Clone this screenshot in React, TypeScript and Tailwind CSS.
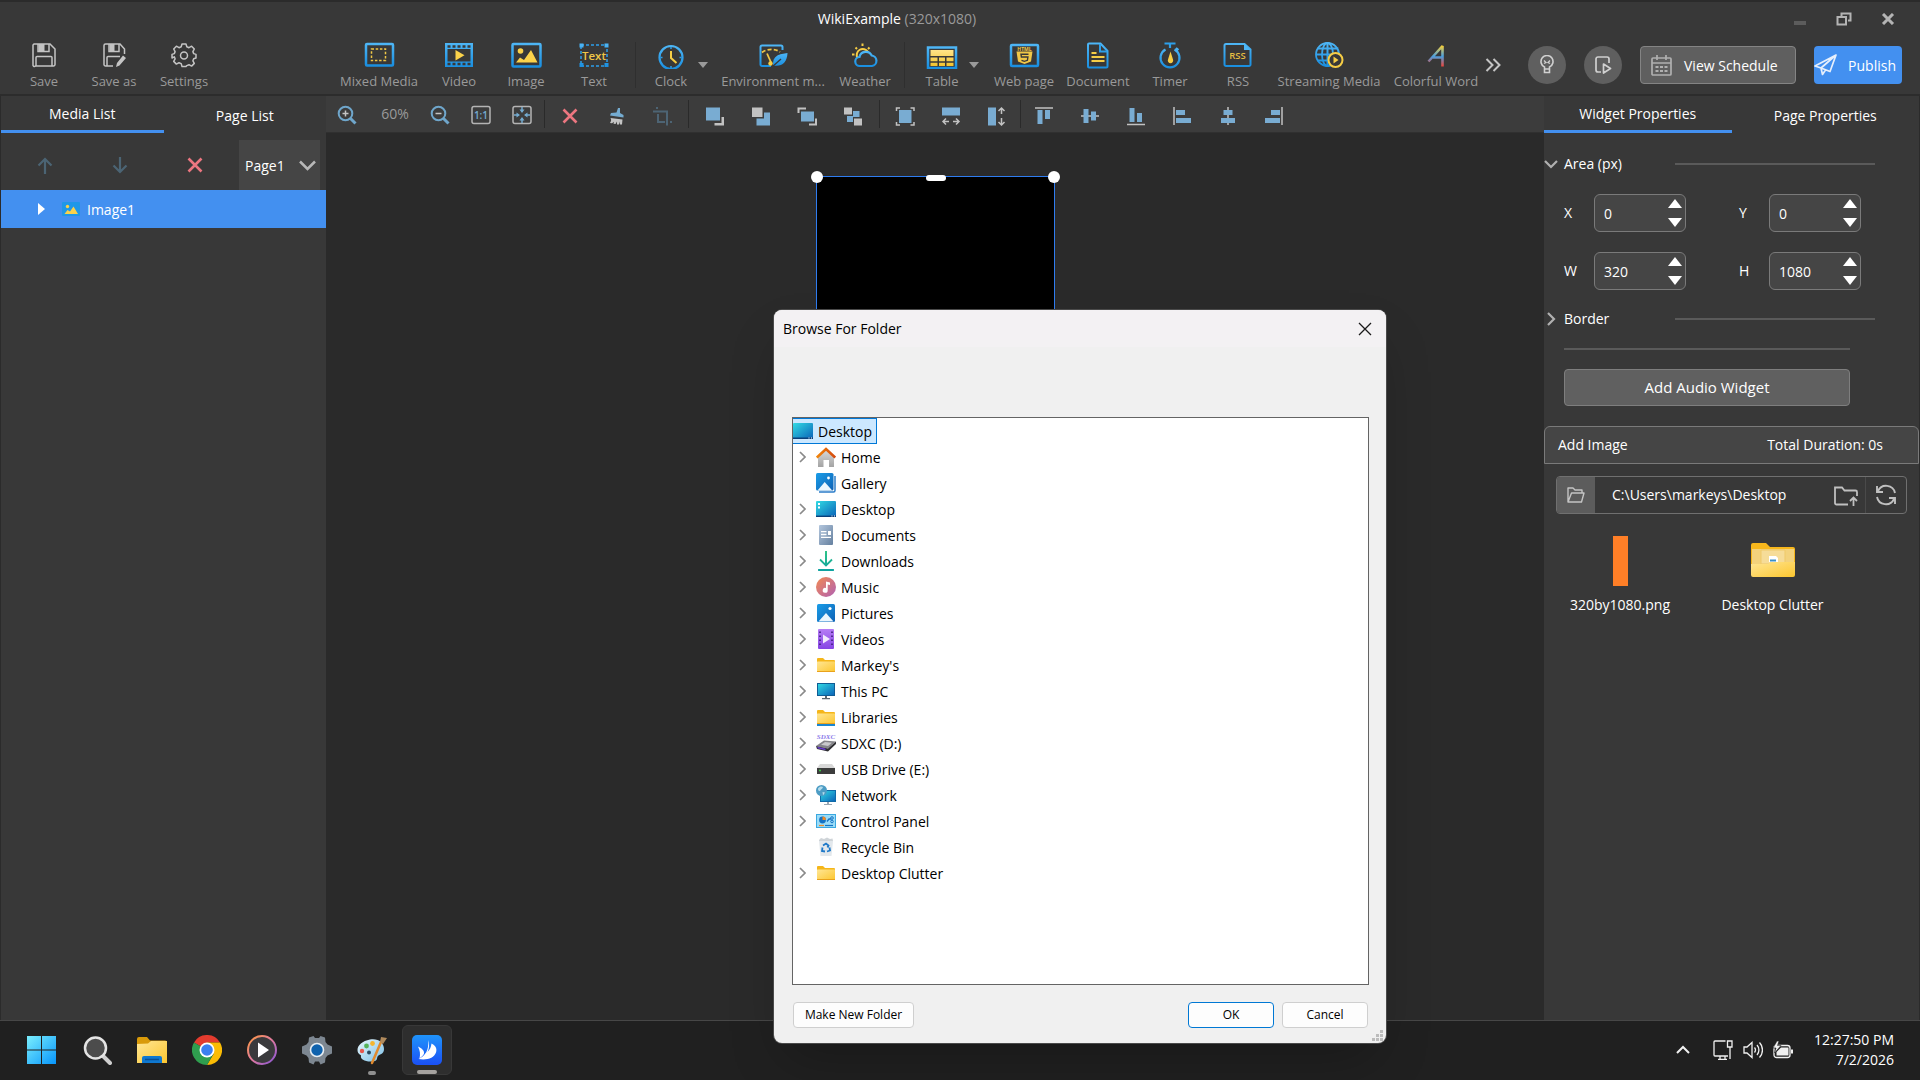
import React from 'react';

type Icon = React.FC;

/* ---------- shared gradients ---------- */

const Gradients: React.FC = () => (
  <svg className="absolute h-0 w-0" aria-hidden="true">
    <defs>
      <linearGradient id="gBlue" x1="0" y1="0" x2="0" y2="1">
        <stop offset="0" stopColor="#4db5f5" />
        <stop offset="1" stopColor="#1a8fe0" />
      </linearGradient>
      <linearGradient id="gYellow" x1="0" y1="0" x2="0" y2="1">
        <stop offset="0" stopColor="#ffe48a" />
        <stop offset="1" stopColor="#f2c32e" />
      </linearGradient>
      <linearGradient id="gScreen" x1="0" y1="0" x2="1" y2="1">
        <stop offset="0" stopColor="#32dbe4" />
        <stop offset="1" stopColor="#0a62b8" />
      </linearGradient>
      <linearGradient id="gPhoto" x1="0" y1="0" x2="1" y2="1">
        <stop offset="0" stopColor="#1a9de8" />
        <stop offset="1" stopColor="#0f62b5" />
      </linearGradient>
      <linearGradient id="gFolder" x1="0" y1="0" x2="1" y2="1">
        <stop offset="0" stopColor="#ffe694" />
        <stop offset="1" stopColor="#fcc62f" />
      </linearGradient>
      <linearGradient id="gDoc" x1="0" y1="0" x2="1" y2="1">
        <stop offset="0" stopColor="#b3c6dd" />
        <stop offset="1" stopColor="#65809f" />
      </linearGradient>
      <linearGradient id="gMusic" x1="0" y1="0" x2="1" y2="1">
        <stop offset="0" stopColor="#f38a52" />
        <stop offset="1" stopColor="#b061b4" />
      </linearGradient>
      <linearGradient id="gVideo" x1="0" y1="0" x2="0" y2="1">
        <stop offset="0" stopColor="#b67df5" />
        <stop offset="1" stopColor="#8544e4" />
      </linearGradient>
      <linearGradient id="gGreen" x1="0" y1="0" x2="0" y2="1">
        <stop offset="0" stopColor="#2fc487" />
        <stop offset="1" stopColor="#0fa3a0" />
      </linearGradient>
      <linearGradient id="gHouse" x1="0" y1="0" x2="0" y2="1">
        <stop offset="0" stopColor="#dcdcdc" />
        <stop offset="1" stopColor="#a3a3a3" />
      </linearGradient>
      <linearGradient id="gRoof" x1="0" y1="0" x2="1" y2="0">
        <stop offset="0" stopColor="#f2860a" />
        <stop offset="1" stopColor="#d44a10" />
      </linearGradient>
      <linearGradient id="gWord" x1="0" y1="0" x2="0" y2="1">
        <stop offset="0" stopColor="#f6cf3a" />
        <stop offset="0.5" stopColor="#4aa0e0" />
        <stop offset="1" stopColor="#f0453a" />
      </linearGradient>
      <linearGradient id="gWin" x1="0" y1="0" x2="1" y2="1">
        <stop offset="0" stopColor="#7beffd" />
        <stop offset="1" stopColor="#0795fb" />
      </linearGradient>
      <linearGradient id="gRing" x1="0" y1="0" x2="1" y2="1">
        <stop offset="0" stopColor="#ff9a3d" />
        <stop offset="0.5" stopColor="#e07aa0" />
        <stop offset="1" stopColor="#8353d8" />
      </linearGradient>
      <linearGradient id="gBird" x1="0" y1="0" x2="0" y2="1">
        <stop offset="0" stopColor="#1f94fb" />
        <stop offset="1" stopColor="#1b50f5" />
      </linearGradient>
      <linearGradient id="gPalette" x1="0" y1="0" x2="1" y2="1">
        <stop offset="0" stopColor="#e9f7fd" />
        <stop offset="1" stopColor="#7cc0e6" />
      </linearGradient>
    </defs>
  </svg>
);

/* ---------- main toolbar icons, 32x28 ---------- */

const Tool: React.FC<{ children: React.ReactNode }> = ({ children }) => (
  <svg width="32" height="28" viewBox="0 0 32 28" fill="none" aria-hidden="true">
    {children}
  </svg>
);

const SaveIcon: Icon = () => (
  <Tool>
    <g stroke="#c4c4c4" strokeWidth="1.5">
      <path d="M6 3h16l5 5v15.500a1.500 1.500 0 0 1-1.500 1.500h-18A1.500 1.500 0 0 1 5 23.500V4z" />
      <path d="M8 25v-8.500a1 1 0 0 1 1-1h14a1 1 0 0 1 1 1V25" />
      <path d="M10 3v7.500h11V3" />
    </g>
    <path d="M10.500 3h6v7h-6z" fill="#c4c4c4" />
  </Tool>
);

const SaveAsIcon: Icon = () => (
  <Tool>
    <g stroke="#c4c4c4" strokeWidth="1.500">
      <path d="M15 25H7.500A1.500 1.500 0 0 1 6 23.500V4.500A1.500 1.500 0 0 1 7.500 3H22l4.500 5v5" />
      <path d="M9 25v-8.500a1 1 0 0 1 1-1h12" />
      <path d="M11 3v7.500h10V3" />
    </g>
    <path d="M11.500 3h5v7h-5zM25 14.500l3 2.500-6.500 7.500-3.500 1.500 1-4z" fill="#c4c4c4" />
  </Tool>
);

const GearIcon: Icon = () => (
  <Tool>
    <g stroke="#c4c4c4" strokeWidth="1.500" strokeLinejoin="round">
      <path d="M14 3h4l.8 2.800 2.200.9 2.600-1.500 2.700 2.800-1.400 2.600.8 2 2.300.8v3.600l-2.300.8-.8 2 1.400 2.600-2.700 2.700-2.600-1.400-2.200.9L18 25.500h-4l-.8-2.900-2.200-.9-2.600 1.400-2.700-2.700 1.400-2.600-.8-2L4 17v-3.600l2.300-.8.8-2L5.700 8l2.700-2.800L11 6.700l2.200-.9z" />
      <circle cx="16" cy="14.500" r="3.500" />
    </g>
  </Tool>
);

const MixedMediaIcon: Icon = () => (
  <Tool>
    <rect x="3" y="3" width="27" height="21.500" rx="1" stroke="url(#gBlue)" strokeWidth="2.500" />
    <rect x="8.500" y="8" width="14" height="11.500" stroke="#f0c747" strokeWidth="1.500" strokeDasharray="2.500 1.700" />
  </Tool>
);

const VideoIcon: Icon = () => (
  <Tool>
    <path d="M2 2h28v24H2z" fill="url(#gBlue)" />
    <path d="M4.500 8h23v12.500h-23z" fill="#383838" />
    <path d="M4.500 5.500h23M4.500 23h23" stroke="#383838" strokeWidth="2.500" strokeDasharray="3 2" />
    <path d="M12.500 9l9 5.200-9 5.200z" fill="#fbd24a" />
  </Tool>
);

const ImageIcon: Icon = () => (
  <Tool>
    <rect x="2.500" y="3" width="28" height="22.500" rx="1" stroke="url(#gBlue)" strokeWidth="2.500" />
    <circle cx="10.500" cy="10" r="2.800" fill="#fbd24a" />
    <path d="M6 21.500l4-5 4 2.500 7-10 6.500 12.500z" fill="#fbd24a" />
  </Tool>
);

const TextIcon: Icon = () => (
  <Tool>
    <rect x="3" y="4" width="26" height="21" stroke="#2d9fea" strokeWidth="1.500" strokeDasharray="3 2" />
    <path d="M1.500 2.500h4v4h-4zM26.500 2.500h4v4h-4zM1.500 22h4v4h-4zM26.500 22h4v4h-4z" fill="url(#gBlue)" />
    <text x="16" y="18.500" textAnchor="middle" fontSize="11.500" fontFamily="Open Sans, sans-serif" fontWeight="600" fill="#f0c747">
      Text
    </text>
  </Tool>
);

const ClockIcon: Icon = () => (
  <Tool>
    <circle cx="16" cy="16.500" r="11.500" stroke="url(#gBlue)" strokeWidth="2.200" />
    <path d="M16 10v7l5.500 5" stroke="#f6cd45" strokeWidth="2" />
    <path d="M16 6v2M16 25v2M5.500 16.500h2M24.500 16.500h2" stroke="#2d9fea" strokeWidth="1.500" />
  </Tool>
);

const EnvironmentIcon: Icon = () => (
  <Tool>
    <path d="M25.500 9V6a1.500 1.500 0 0 0-1.500-1.500H5A1.500 1.500 0 0 0 3.500 6v17.500A1.500 1.500 0 0 0 5 25h9" stroke="url(#gBlue)" strokeWidth="2" />
    <path d="M5 11.500c4-3.500 13-4.500 18-.5" stroke="#f0c747" strokeWidth="1.800" strokeDasharray="4 2.200" />
    <path d="M10 12.500l4.500 10" stroke="#f0c747" strokeWidth="1.800" />
    <circle cx="13.500" cy="22.500" r="2.200" fill="#f6cd45" />
    <path d="M30.500 12c-8 1-15 2-14.500 12.500 9 1.500 14-3 14.500-12.500z" fill="url(#gBlue)" />
    <path d="M15 26l9-8" stroke="#383838" strokeWidth="1.300" />
  </Tool>
);

const WeatherIcon: Icon = () => (
  <Tool>
    <path d="M8.500 17a6 6 0 1 1 10.500-6" stroke="#f6cd45" strokeWidth="2" />
    <path d="M13.500 2.500v2.500M6.500 6.500l1.500 1.500M20.500 6.500l-1.500 1.500M3 13.500h2.500" stroke="#f6cd45" strokeWidth="2" />
    <path d="M11 25a4.500 4.500 0 0 1-.5-9 6.500 6.500 0 0 1 12.200-1.500A5.300 5.300 0 0 1 23 25z" stroke="url(#gBlue)" strokeWidth="2.200" fill="#383838" />
  </Tool>
);

const TableIcon: Icon = () => (
  <Tool>
    <rect x="2" y="6.500" width="28" height="20.500" stroke="url(#gBlue)" strokeWidth="2.500" />
    <path d="M4.500 9h23v6h-23zM4.500 16.500h7v3.800h-7zM13 16.500h6v3.800h-6zM20.500 16.500h7v3.800h-7zM4.500 21.800h7V25h-7zM13 21.800h6V25h-6zM20.500 21.800h7V25h-7z" fill="url(#gYellow)" />
  </Tool>
);

const WebPageIcon: Icon = () => (
  <Tool>
    <rect x="3" y="4" width="27" height="21" rx="1" stroke="url(#gBlue)" strokeWidth="2.500" />
    <text x="16.500" y="9.500" textAnchor="middle" fontSize="5" fontFamily="Open Sans, sans-serif" fontWeight="700" fill="#f0c747">
      HTML
    </text>
    <path d="M8.500 10.500h16l-1.500 10-6.500 2.500-6.500-2.500z" fill="#f0c747" />
    <path d="M20.500 13.200h-7.500l.4 2.800h6.500l-.5 3.300-3 1-2.900-1" stroke="#383838" strokeWidth="1.400" />
  </Tool>
);

const DocumentIcon: Icon = () => (
  <Tool>
    <path d="M7 2.500h11.500l7 7.500v15.500a1 1 0 0 1-1 1H7a1 1 0 0 1-1-1v-22a1 1 0 0 1 1-1z" stroke="url(#gBlue)" strokeWidth="2" />
    <path d="M18 3v7.500h7" stroke="#2d9fea" strokeWidth="2" />
    <path d="M9.500 12h5M9.500 16h13M9.500 20h13" stroke="#f6cd45" strokeWidth="1.800" />
  </Tool>
);

const TimerIcon: Icon = () => (
  <Tool>
    <path d="M10.500 2.500h11M16 3v4" stroke="#2d9fea" strokeWidth="2.200" />
    <path d="M11.500 8.500a9.500 9.500 0 1 0 9 0M22 7l2.500 2" stroke="url(#gBlue)" strokeWidth="2.200" />
    <path d="M16.500 10.500l2.500 8a2.700 2.700 0 1 1-5 0z" fill="#f6cd45" />
  </Tool>
);

const RssIcon: Icon = () => (
  <Tool>
    <path d="M4 3h18.500l6 5.500v15a1.500 1.500 0 0 1-1.500 1.500H4a1.500 1.500 0 0 1-1.500-1.500v-19A1.500 1.500 0 0 1 4 3z" stroke="url(#gBlue)" strokeWidth="2" />
    <path d="M22 2.500V9h6.500z" fill="#4db5f5" />
    <text x="15.500" y="18" textAnchor="middle" fontSize="9.500" fontFamily="Open Sans, sans-serif" fontWeight="600" fill="#e5bd42">
      RSS
    </text>
  </Tool>
);

const StreamingIcon: Icon = () => (
  <Tool>
    <g stroke="url(#gBlue)" strokeWidth="1.800">
      <circle cx="14.500" cy="13.500" r="11.500" />
      <ellipse cx="14.500" cy="13.500" rx="5.500" ry="11.500" />
      <path d="M14.400 2v23M14.600 2v23M4.500 7.500h20v.1M3 13.500h23v.1M4.500 19.500h20v.1" />
    </g>
    <circle cx="22.500" cy="19" r="7" fill="#383838" stroke="#f6cd45" strokeWidth="2" />
    <path d="M20.500 15.500l5 3.500-5 3.500z" fill="#f6cd45" />
  </Tool>
);

const ColorfulWordIcon: Icon = () => (
  <Tool>
    <path d="M8.500 20.500L22.500 5v20.500M13 16.500h9" stroke="url(#gWord)" strokeWidth="2.600" strokeLinejoin="bevel" />
  </Tool>
);

/* ---------- canvas toolbar icons, 20x20 ---------- */

const Mini: React.FC<{ children: React.ReactNode }> = ({ children }) => (
  <svg width="20" height="20" viewBox="0 0 20 20" fill="none" aria-hidden="true">
    {children}
  </svg>
);

const ZoomInIcon: Icon = () => (
  <Mini>
    <circle cx="8.500" cy="8.500" r="6.800" stroke="#6fa6cb" strokeWidth="2" />
    <path d="M13.500 13.500l5 5" stroke="#6fa6cb" strokeWidth="3" />
    <path d="M5.500 8.500h6M8.500 5.500v6" stroke="#c4c4c4" strokeWidth="1.500" />
  </Mini>
);

const ZoomOutIcon: Icon = () => (
  <Mini>
    <circle cx="8.500" cy="8.500" r="6.800" stroke="#6fa6cb" strokeWidth="2" />
    <path d="M13.500 13.500l5 5" stroke="#6fa6cb" strokeWidth="3" />
    <path d="M5.500 8.500h6" stroke="#c4c4c4" strokeWidth="1.500" />
  </Mini>
);

const ActualSizeIcon: Icon = () => (
  <Mini>
    <rect x="1" y="1.500" width="18" height="17" rx="2" stroke="#b4b4b4" strokeWidth="1.500" />
    <text x="10" y="14" textAnchor="middle" fontSize="10" fontFamily="Open Sans, sans-serif" fontWeight="600" fill="#74abd0">
      1:1
    </text>
  </Mini>
);

const FitIcon: Icon = () => (
  <Mini>
    <rect x="1" y="1.500" width="18" height="17" rx="2" stroke="#b4b4b4" strokeWidth="1.500" />
    <path d="M10 2v4.500M10 13.500V18M2 10h4.500M13.500 10H18" stroke="#74abd0" strokeWidth="1.500" />
    <path d="M7.500 4.500h5L10 8zM7.500 15.500h5L10 12zM4.500 7.500v5L8 10zM15.500 7.500v5L12 10z" fill="#74abd0" />
  </Mini>
);

const RedCrossIcon: Icon = () => (
  <Mini>
    <path d="M3.500 3.500l13 13M16.500 3.500l-13 13" stroke="#ec7680" strokeWidth="2.600" />
  </Mini>
);

const BroomIcon: Icon = () => (
  <Mini>
    <path d="M12 2h2v5l3.500 2v2.500L4 9.500 5 7l5.500-.5z" fill="#74abd0" />
    <path d="M4.500 12l12 1.500-.5 5h-2v-3l-1 3h-2v-3l-1.500 2.500-2-.3.500-2-2 1.500-2-.2c1-1.500 1.700-3 .5-5z" fill="#c4c4c4" />
  </Mini>
);

const CropIcon: Icon = () => (
  <Mini>
    <path d="M1 5.500h14v14M6 8v8h7" stroke="#4d6474" strokeWidth="2" />
    <path d="M4 1h2v2H4zM18 15h2v2h-2z" fill="#4d6474" />
  </Mini>
);

const B = '#79acd2';
const G = '#c2c2c2';

const ToTopIcon: Icon = () => (
  <Mini>
    <path d="M1 1.500h14v13H1z" fill={B} />
    <path d="M16.500 11H19v8.500H9.500V17h7z" fill={G} />
  </Mini>
);
const ToBottomIcon: Icon = () => (
  <Mini>
    <path d="M1 1.500h10.500V11H1z" fill={G} />
    <path d="M13 6.500h6v13H5.500v-7H13z" fill={B} />
  </Mini>
);
const ForwardIcon: Icon = () => (
  <Mini>
    <path d="M4 5.500h13v10H4z" fill={B} />
    <path d="M1.500 7V2.500H9M19 12.500v6h-7" stroke={G} strokeWidth="2" />
  </Mini>
);
const BackwardIcon: Icon = () => (
  <Mini>
    <path d="M10 5h6.500v6H10v5H4v-6h6z" fill={B} />
    <path d="M1 1.500h8V8.500H1zM11 12.500h8v7h-8z" fill={G} />
  </Mini>
);
const FillIcon: Icon = () => (
  <Mini>
    <path d="M4 4h12.500v13H4z" fill={B} />
    <path d="M1.500 5V2H5M15.500 2H19v3M1.500 16v3H5M15.500 19H19v-3" stroke={G} strokeWidth="1.500" />
  </Mini>
);
const FillWidthIcon: Icon = () => (
  <Mini>
    <path d="M1 1.500h18v8H1z" fill={B} />
    <path d="M2 15.500h6M12 15.500h6M5 12.500l-3 3 3 3M15 12.500l3 3-3 3" stroke={G} strokeWidth="1.500" />
  </Mini>
);
const FillHeightIcon: Icon = () => (
  <Mini>
    <path d="M1 1.500h8v18H1z" fill={B} />
    <path d="M14.500 2v6M14.500 12v7M11.500 5l3-3 3 3M11.500 16l3 3 3-3" stroke={G} strokeWidth="1.500" />
  </Mini>
);
const AlignTopIcon: Icon = () => (
  <Mini>
    <path d="M3.500 4h5v14h-5zM11 4h5v9h-5z" fill={B} />
    <path d="M1 2h18" stroke={G} strokeWidth="1.500" />
  </Mini>
);
const AlignMiddleIcon: Icon = () => (
  <Mini>
    <path d="M1 10h18" stroke={G} strokeWidth="1.500" />
    <path d="M3.500 3h5v14h-5zM11 5.500h5v9h-5z" fill={B} />
  </Mini>
);
const AlignBottomIcon: Icon = () => (
  <Mini>
    <path d="M3.500 2h5v14h-5zM11 7h5v9h-5z" fill={B} />
    <path d="M1 18.500h18" stroke={G} strokeWidth="1.500" />
  </Mini>
);
const AlignLeftIcon: Icon = () => (
  <Mini>
    <path d="M4 4h9v5H4zM4 12h15v5H4z" fill={B} />
    <path d="M2 1v18" stroke={G} strokeWidth="1.500" />
  </Mini>
);
const AlignCenterIcon: Icon = () => (
  <Mini>
    <path d="M10 1v18" stroke={G} strokeWidth="1.500" />
    <path d="M5.500 4h9v5h-9zM3 12h14v5H3z" fill={B} />
  </Mini>
);
const AlignRightIcon: Icon = () => (
  <Mini>
    <path d="M7 4h9v5H7zM1 12h15v5H1z" fill={B} />
    <path d="M18 1v18" stroke={G} strokeWidth="1.500" />
  </Mini>
);

/* ---------- folder tree icons, 20x20 ---------- */

const DesktopIcon: React.FC<{ dots?: boolean }> = ({ dots }) => (
  <Mini>
    <rect y="2" width="20" height="16" rx="1" fill="url(#gScreen)" />
    <path d="M0 17.300h20" stroke="#0a3f7a" strokeWidth="1.400" />
    <path d="M15.500 16.500h1v1h-1zM18 16.500h1v1h-1z" fill="#fff" />
    {dots && <path d="M2 4h2v2H2zM2 7.500h2v2H2z" fill="#fff" />}
  </Mini>
);
const HomeIcon: Icon = () => (
  <Mini>
    <path d="M2 9l8-7 8 7v11h-5v-7H7.500v7H2z" fill="url(#gHouse)" />
    <path d="M.8 10.500L10 2l9.200 8.500" stroke="url(#gRoof)" strokeWidth="2.600" />
  </Mini>
);
const GalleryIcon: Icon = () => (
  <Mini>
    <path d="M3 19h14.500a1.500 1.500 0 0 0 1.500-1.500V3" stroke="#2b7cc9" strokeWidth="1.500" />
    <rect width="17.500" height="17.500" rx="1.500" fill="url(#gPhoto)" />
    <path d="M1.500 17.500L8.700 9l7.500 8.500z" fill="#eaf6fe" />
    <circle cx="12.500" cy="5" r="1.400" fill="#fff" />
  </Mini>
);
const DocumentsIcon: Icon = () => (
  <Mini>
    <rect x="3" y="0" width="14" height="20" rx="1" fill="url(#gDoc)" />
    <path d="M5 6.700h5.500M5 9.500h5.500M5 12.300h10" stroke="#fff" strokeWidth="1.300" />
    <path d="M12 6h3v4h-3z" fill="#fff" />
  </Mini>
);
const DownloadsIcon: Icon = () => (
  <Mini>
    <path d="M9.900 0v14h.2V0M4 8.500l6 6 6-6M3 18.900h14v.1H3z" stroke="url(#gGreen)" strokeWidth="1.800" />
  </Mini>
);
const MusicIcon: Icon = () => (
  <Mini>
    <circle cx="10" cy="10" r="10" fill="url(#gMusic)" />
    <path d="M10 4.500l4 1v2.500l-2.300-.6v5.800a2.500 2.500 0 1 1-1.700-2.300z" fill="#fff" />
  </Mini>
);
const PicturesIcon: Icon = () => (
  <Mini>
    <rect x="1" y="1" width="18" height="18" rx="1.500" fill="url(#gPhoto)" />
    <path d="M2.500 18.500L10 10l7.500 8.500z" fill="#eaf6fe" />
    <circle cx="14" cy="5.500" r="1.600" fill="#fff" />
  </Mini>
);
const VideosIcon: Icon = () => (
  <Mini>
    <rect x="2" y="0" width="16" height="20" rx="1" fill="url(#gVideo)" />
    <path d="M4 2.500v16M16 2.500v16" stroke="#3d1d7a" strokeWidth="1.600" strokeDasharray="1.600 2.400" />
    <path d="M7 5.500l7 4.500-7 4.500z" fill="#f2eafd" />
  </Mini>
);
const FolderIcon: React.FC<{ strip?: boolean }> = ({ strip }) => (
  <Mini>
    <path d="M1 4a1 1 0 0 1 1-1h5l2 2h9a1 1 0 0 1 1 1v5H1z" fill="#f5b61a" />
    <rect x="1" y="6.500" width="18" height="10.500" rx="0.500" fill="url(#gFolder)" />
    <path d="M1 16.500h18" stroke="#e9a21c" />
    {strip && <path d="M1 18h18" stroke="#1a86d0" strokeWidth="2" />}
  </Mini>
);
const ThisPcIcon: Icon = () => (
  <Mini>
    <rect x="1.500" y="2.500" width="17" height="12" fill="url(#gScreen)" stroke="#0f5c94" />
    <path d="M9 15h2v2h3v1.200H6V17h3z" fill="#5b6670" />
  </Mini>
);
const SdxcIcon: Icon = () => (
  <Mini>
    <text x="10" y="5.500" textAnchor="middle" fontSize="7" fontStyle="italic" fontWeight="700" fontFamily="Liberation Serif, serif" fill="#8a7bea">
      SDXC
    </text>
    <path d="M8 7.500l12 1-8 7L0 13z" fill="#85858a" />
    <path d="M0 13l12 2.500 8-7v2.500l-8 7.500L1 16z" fill="#2f2f33" />
    <path d="M1.500 14.500l8 2" stroke="#6a3fd0" strokeWidth="1.500" />
    <path d="M9 9l7 .8-4 3.200-7-1.200z" fill="#c9c9cc" />
  </Mini>
);
const UsbIcon: Icon = () => (
  <Mini>
    <path d="M4 5h12l3 4H1z" fill="#d8d8d8" />
    <rect x="1" y="9" width="18" height="6" fill="#3c3c3c" />
    <circle cx="4" cy="11.500" r="0.900" fill="#3ee04a" />
  </Mini>
);
const NetworkIcon: Icon = () => (
  <Mini>
    <rect x="4.500" y="5.500" width="15" height="11" fill="url(#gScreen)" stroke="#0f6aa8" />
    <path d="M11 17h2v2h3v1H8v-1h3z" fill="#9aa7b2" />
    <circle cx="5.500" cy="5.500" r="5.500" fill="#4d9cc4" />
    <path d="M2 3.500c2-2.500 4-2 5-1.500-.5 2-2 2-3 4-1.500.5-2-1-2-2.500zM6.500 7l2.500.500-2 3z" fill="#b5dcec" />
  </Mini>
);
const ControlPanelIcon: Icon = () => (
  <Mini>
    <rect x="0.500" y="3.500" width="19" height="13" fill="#9adcf8" stroke="#3aa8e0" />
    <circle cx="6.500" cy="9" r="3.400" fill="#1673c4" />
    <path d="M6.500 9V5.600A3.400 3.400 0 0 1 9.900 9z" fill="#f08a24" />
    <path d="M11 10.500l2-2.500 2 0" stroke="#1673c4" strokeWidth="1.300" />
    <circle cx="16" cy="7" r="1.300" stroke="#1673c4" />
    <circle cx="16" cy="10.500" r="1.300" stroke="#1673c4" />
    <path d="M3 14.500h5" stroke="#f08a24" strokeWidth="1.200" />
    <path d="M9 14.500h8" stroke="#1673c4" strokeWidth="1.200" />
  </Mini>
);
const RecycleIcon: Icon = () => (
  <Mini>
    <path d="M3 3l2-2 3 1 3-1.500L14 2l2.500-.5L17 4H3z" fill="#cfd4d8" />
    <path d="M3 4h14l-1.500 15h-11z" fill="#e3e8ec" />
    <path d="M7 8.500l3-2 2.500 2-1 2M13.500 10.500l.5 3-3 1M9 14.500l-3-.5.500-3.500" stroke="#1d78c8" strokeWidth="1.800" />
  </Mini>
);

/* ---------- data ---------- */

type ToolItem = { label: string; icon: Icon; width: string };

const fileTools: ToolItem[] = [
  { label: 'Save', icon: SaveIcon, width: 'w-[70px]' },
  { label: 'Save as', icon: SaveAsIcon, width: 'w-[70px]' },
  { label: 'Settings', icon: GearIcon, width: 'w-[70px]' },
];
const mediaTools: ToolItem[] = [
  { label: 'Mixed Media', icon: MixedMediaIcon, width: 'w-24' },
  { label: 'Video', icon: VideoIcon, width: 'w-16' },
  { label: 'Image', icon: ImageIcon, width: 'w-[70px]' },
  { label: 'Text', icon: TextIcon, width: 'w-[66px]' },
];
const infoTools: ToolItem[] = [
  { label: 'Environment m...', icon: EnvironmentIcon, width: 'w-[122px]' },
  { label: 'Weather', icon: WeatherIcon, width: 'w-[62px]' },
];
const moreTools: ToolItem[] = [
  { label: 'Web page', icon: WebPageIcon, width: 'w-[82px]' },
  { label: 'Document', icon: DocumentIcon, width: 'w-[66px]' },
  { label: 'Timer', icon: TimerIcon, width: 'w-[78px]' },
  { label: 'RSS', icon: RssIcon, width: 'w-[58px]' },
  { label: 'Streaming Media', icon: StreamingIcon, width: 'w-[124px]' },
  { label: 'Colorful Word', icon: ColorfulWordIcon, width: 'w-[90px]' },
];

type MiniItem = { label: string; icon: Icon };

const editTools: MiniItem[] = [
  { label: 'Delete', icon: RedCrossIcon },
  { label: 'Clear', icon: BroomIcon },
  { label: 'Crop', icon: CropIcon },
];
const orderTools: MiniItem[] = [
  { label: 'Bring to front', icon: ToTopIcon },
  { label: 'Send to back', icon: ToBottomIcon },
  { label: 'Bring forward', icon: ForwardIcon },
  { label: 'Send backward', icon: BackwardIcon },
];
const fillTools: MiniItem[] = [
  { label: 'Fill page', icon: FillIcon },
  { label: 'Fill width', icon: FillWidthIcon },
  { label: 'Fill height', icon: FillHeightIcon },
];
const alignTools: MiniItem[] = [
  { label: 'Align top', icon: AlignTopIcon },
  { label: 'Align middle', icon: AlignMiddleIcon },
  { label: 'Align bottom', icon: AlignBottomIcon },
  { label: 'Align left', icon: AlignLeftIcon },
  { label: 'Align center', icon: AlignCenterIcon },
  { label: 'Align right', icon: AlignRightIcon },
];

const folders: { name: string; icon: React.ReactNode; leaf?: boolean }[] = [
  { name: 'Home', icon: <HomeIcon /> },
  { name: 'Gallery', icon: <GalleryIcon />, leaf: true },
  { name: 'Desktop', icon: <DesktopIcon dots /> },
  { name: 'Documents', icon: <DocumentsIcon /> },
  { name: 'Downloads', icon: <DownloadsIcon /> },
  { name: 'Music', icon: <MusicIcon /> },
  { name: 'Pictures', icon: <PicturesIcon /> },
  { name: 'Videos', icon: <VideosIcon /> },
  { name: "Markey's", icon: <FolderIcon /> },
  { name: 'This PC', icon: <ThisPcIcon /> },
  { name: 'Libraries', icon: <FolderIcon strip /> },
  { name: 'SDXC (D:)', icon: <SdxcIcon /> },
  { name: 'USB Drive (E:)', icon: <UsbIcon /> },
  { name: 'Network', icon: <NetworkIcon /> },
  { name: 'Control Panel', icon: <ControlPanelIcon /> },
  { name: 'Recycle Bin', icon: <RecycleIcon />, leaf: true },
  { name: 'Desktop Clutter', icon: <FolderIcon /> },
];

/* ---------- header ---------- */

const TitleBar: React.FC = () => (
  <header className="flex h-9 items-center border-t-2 border-[#2b2b2b] pr-2.5">
    <h1 className="flex-1 pl-4 text-center text-sm">
      WikiExample <span className="text-[#9a9a9a]">(320x1080)</span>
    </h1>
    <button aria-label="Minimize" className="flex h-8 w-11 items-center justify-center">
      <span className="mt-2 h-1 w-3 bg-[#5c5c5c]" />
    </button>
    <button aria-label="Restore" className="flex h-8 w-11 items-center justify-center">
      <svg width="16" height="14" viewBox="0 0 16 14" fill="none" stroke="#b4b4b4" strokeWidth="2">
        <path d="M5.500 4V1.500h9v7H12" />
        <path d="M1.500 5h8.500v7.500H1.500z" />
      </svg>
    </button>
    <button aria-label="Close" className="flex h-8 w-11 items-center justify-center">
      <svg width="14" height="12" viewBox="0 0 14 12" stroke="#b4b4b4" strokeWidth="3">
        <path d="M2 1l10 10M12 1L2 11" />
      </svg>
    </button>
  </header>
);

const ToolButton: React.FC<ToolItem> = ({ label, icon: ItemIcon, width }) => (
  <button className={`${width} flex shrink-0 flex-col items-center pt-[5px] text-[13px] leading-[18px] whitespace-nowrap text-[#9a9a9a]`}>
    <ItemIcon />
    <span className="mt-[3px]">{label}</span>
  </button>
);

const DropArrow: React.FC<{ label: string }> = ({ label }) => (
  <button aria-label={label} className="flex w-[18px] shrink-0 items-center justify-center">
    <svg width="10" height="6" viewBox="0 0 10 6">
      <path d="M0 0h10L5 6z" fill="#9a9a9a" />
    </svg>
  </button>
);

const Toolbar: React.FC = () => (
  <div className="flex h-[60px] items-stretch border-b-2 border-[#2c2c2c] pr-[18px] pl-[9px]">
    {fileTools.map((t) => (
      <ToolButton key={t.label} {...t} />
    ))}
    <div className="w-28 shrink-0" />
    {mediaTools.map((t) => (
      <ToolButton key={t.label} {...t} />
    ))}
    <div className="my-1.5 mr-3 ml-2 w-px shrink-0 bg-[#2f2f2f]" />
    <ToolButton label="Clock" icon={ClockIcon} width="w-[46px]" />
    <DropArrow label="Clock types" />
    {infoTools.map((t) => (
      <ToolButton key={t.label} {...t} />
    ))}
    <div className="my-1.5 mr-3.5 ml-2 w-px shrink-0 bg-[#2f2f2f]" />
    <ToolButton label="Table" icon={TableIcon} width="w-[46px]" />
    <DropArrow label="Table types" />
    {moreTools.map((t) => (
      <ToolButton key={t.label} {...t} />
    ))}
    <button aria-label="More widgets" className="flex w-6 shrink-0 items-center justify-center">
      <svg width="16" height="14" viewBox="0 0 16 14" fill="none" stroke="#c4c4c4" strokeWidth="2">
        <path d="M1.500 1l6 6-6 6M8.500 1l6 6-6 6" />
      </svg>
    </button>
    <div className="ml-auto flex shrink-0 items-center">
      <button aria-label="Tips" className="mr-[18px] flex h-[38px] w-[38px] items-center justify-center rounded-full bg-[#5f5f5f]">
        <svg width="16" height="20" viewBox="0 0 16 20" fill="none" stroke="#d0d0d0" strokeWidth="1.600">
          <path d="M5.500 14v-2A6 6 0 1 1 10.500 12v2zM5.500 14v3.500h5V14" />
          <path d="M5 5.500l2 2-2 1M11 5.500l-2 2 2 1" strokeWidth="1.300" />
        </svg>
      </button>
      <button aria-label="Preview" className="mr-[18px] flex h-[38px] w-[38px] items-center justify-center rounded-full bg-[#5f5f5f]">
        <svg width="18" height="18" viewBox="0 0 18 18" fill="none" stroke="#d0d0d0" strokeWidth="1.700">
          <path d="M7 16H4a2 2 0 0 1-2-2V3a2 2 0 0 1 2-2h9a2 2 0 0 1 2 2v4" />
          <path d="M9.500 8l7 4.500-7 4.500z" strokeLinejoin="round" />
        </svg>
      </button>
      <button className="mr-[18px] flex h-[38px] w-[156px] items-center rounded-sm border border-[#848484] bg-[#5f5f5f] pl-2.5 text-sm">
        <svg width="21" height="21" viewBox="0 0 21 21" fill="none" stroke="#b0b0b0" strokeWidth="1.700">
          <rect x="1" y="3" width="19" height="17" rx="1" />
          <path d="M1 8h19M6 0v5M15 0v5" />
          <path d="M4.500 12h3M9 12h3M13.500 12h3M4.500 16h3M9 16h3M13.500 16h3" strokeWidth="2" />
        </svg>
        <span className="ml-3 pt-0.5">View Schedule</span>
      </button>
      <button className="flex h-[38px] w-[88px] items-center rounded-sm bg-[#4390f0] pr-1.5 text-sm">
        <svg width="24" height="22" viewBox="0 0 24 22" fill="none" stroke="#e6effc" strokeWidth="1.700" strokeLinejoin="round">
          <path d="M22 1L1 12l6 2zM22 1L7 14l9 3.500zM22 1l-6 16.500M7 14l1.500 6.500 3-4.500" />
        </svg>
        <span className="ml-auto pt-0.5">Publish</span>
      </button>
    </div>
  </div>
);

/* ---------- left panel ---------- */

const Tabs: React.FC<{ items: string[] }> = ({ items }) => (
  <div className="flex h-[37px] text-sm">
    {items.map((name, i) => (
      <button
        key={name}
        className={i === 0 ? 'flex-1 border-b-[3px] border-[#4390f0] pt-0.5' : 'flex-1 border-b-[3px] border-transparent pt-1.5'}
      >
        {name}
      </button>
    ))}
  </div>
);

const LeftPanel: React.FC = () => (
  <aside className="flex w-[326px] shrink-0 flex-col border-l border-[#2b2b2b]">
    <Tabs items={['Media List', 'Page List']} />
    <div className="flex pt-[7px] pl-1.5">
      <button aria-label="Move up" className="flex h-[50px] w-[75px] items-center justify-center">
        <svg width="16" height="17" viewBox="0 0 16 17" fill="none" stroke="#4b6474" strokeWidth="2.200">
          <path d="M8 17V2M1.500 8.500L8 2l6.500 6.500" />
        </svg>
      </button>
      <button aria-label="Move down" className="flex h-[50px] w-[75px] items-center justify-center">
        <svg width="16" height="17" viewBox="0 0 16 17" fill="none" stroke="#4b6474" strokeWidth="2.200">
          <path d="M8 0v15M1.500 8.500L8 15l6.500-6.500" />
        </svg>
      </button>
      <button aria-label="Remove" className="flex h-[50px] w-[75px] items-center justify-center">
        <RedCrossIcon />
      </button>
      <div className="relative ml-[7px] h-[50px] w-[81px] bg-[#454545]">
        <select aria-label="Page" className="h-full w-full appearance-none bg-[#454545] pt-0.5 pl-1.5 text-sm outline-none">
          <option>Page1</option>
        </select>
        <svg className="pointer-events-none absolute top-5 right-1" width="17" height="11" viewBox="0 0 17 11" fill="none" stroke="#b8b8b8" strokeWidth="2.500">
          <path d="M1 1.500l7.500 7.500L16 1.500" />
        </svg>
      </div>
    </div>
    <button className="flex h-[38px] items-center bg-[#4390f0] pl-[37px] text-sm">
      <svg width="7" height="12" viewBox="0 0 7 12">
        <path d="M0 0l7 6-7 6z" fill="#fff" />
      </svg>
      <svg className="ml-[17px]" width="18" height="14" viewBox="0 0 18 14">
        <rect width="18" height="14" rx="1" fill="#1f97e8" />
        <circle cx="5.500" cy="4.500" r="1.700" fill="#fbd24a" />
        <path d="M2.500 12l3-4 2.500 1.500L11.500 4.500 16 12z" fill="#fbd24a" />
      </svg>
      <span className="ml-[7px] pt-0.5">Image1</span>
    </button>
  </aside>
);

/* ---------- canvas ---------- */

const MiniButtons: React.FC<{ items: MiniItem[] }> = ({ items }) => (
  <>
    {items.map(({ label, icon: ItemIcon }) => (
      <button key={label} aria-label={label} className="flex w-[46px] shrink-0 items-center justify-center">
        <ItemIcon />
      </button>
    ))}
  </>
);

const Canvas: React.FC = () => (
  <main className="flex min-w-0 flex-1 flex-col bg-[#2a2a2a]">
    <div className="flex h-[37px] shrink-0 items-stretch border-b border-[#303030] bg-[#3c3c3c] pt-1 pl-px">
      <button aria-label="Zoom in" className="flex w-10 justify-center pt-[5px]">
        <ZoomInIcon />
      </button>
      <span className="flex w-14 justify-center pt-1 text-sm text-[#9a9a9a]">60%</span>
      <button aria-label="Zoom out" className="flex w-[34px] justify-center pt-[5px]">
        <ZoomOutIcon />
      </button>
      <button aria-label="Actual size" className="flex w-12 justify-center pt-[5px]">
        <ActualSizeIcon />
      </button>
      <button aria-label="Fit to window" className="mr-[3px] flex w-[34px] justify-center pt-[5px]">
        <FitIcon />
      </button>
      <div className="mx-0.5 mb-1 w-px bg-[#2a2a2a]" />
      <MiniButtons items={editTools} />
      <div className="mx-[3px] mb-1 w-px bg-[#2a2a2a]" />
      <MiniButtons items={orderTools} />
      <div className="mr-0.5 ml-[3px] mb-1 w-px bg-[#2a2a2a]" />
      <MiniButtons items={fillTools} />
      <div className="mb-1 w-px bg-[#2a2a2a]" />
      <MiniButtons items={alignTools} />
    </div>
    <div className="relative flex-1 overflow-hidden">
      {/* selected widget with its resize handles */}
      <div className="absolute top-[43px] left-[490px] h-[800px] w-[239px] border border-[#2f7cf0] bg-black">
        <span className="absolute -top-1.5 -left-1.5 h-3 w-3 rounded-full bg-white" />
        <span className="absolute -top-0.5 left-1/2 h-1.5 w-5 -translate-x-1/2 rounded-sm bg-white" />
        <span className="absolute -top-1.5 -right-1.5 h-3 w-3 rounded-full bg-white" />
      </div>
    </div>
  </main>
);

/* ---------- right panel ---------- */

const NumberField: React.FC<{ label: string; value: number }> = ({ label, value }) => (
  <div className="flex w-[175px] items-center">
    <label htmlFor={`area-${label}`} className="w-[30px]">
      {label}
    </label>
    <div className="flex h-[38px] w-[92px] rounded-md border border-[#7a7a7a] bg-[#454545]">
      <input
        id={`area-${label}`}
        type="number"
        defaultValue={value}
        className="w-full min-w-0 [appearance:textfield] bg-transparent pt-0.5 pl-[9px] outline-none [&::-webkit-inner-spin-button]:appearance-none"
      />
      <div className="flex w-5 shrink-0 flex-col items-center justify-between py-1">
        <button aria-label={`Increase ${label}`}>
          <svg width="14" height="9" viewBox="0 0 14 9" className="block">
            <path d="M7 0l7 9H0z" fill="#fff" />
          </svg>
        </button>
        <button aria-label={`Decrease ${label}`}>
          <svg width="14" height="9" viewBox="0 0 14 9" className="block">
            <path d="M0 0h14L7 9z" fill="#fff" />
          </svg>
        </button>
      </div>
    </div>
  </div>
);

const Section: React.FC<{ title: string; open?: boolean }> = ({ title, open }) => (
  <div className="flex items-center">
    <button className="flex w-[131px] items-center" aria-expanded={!!open}>
      <svg width="14" height="14" viewBox="0 0 14 14" fill="none" stroke="#b0b0b0" strokeWidth="2.200">
        <path d={open ? 'M1 4l6 6 6-6' : 'M4 1l6 6-6 6'} />
      </svg>
      <span className="ml-1.5">{title}</span>
    </button>
    <div className="h-0.5 w-[200px] bg-[#5a5a5a]" />
  </div>
);

const RightPanel: React.FC = () => (
  <aside className="flex w-[376px] shrink-0 flex-col border-r border-[#2b2b2b] text-sm">
    <Tabs items={['Widget Properties', 'Page Properties']} />
    <div className="pt-[21px]">
      <Section title="Area (px)" open />
    </div>
    <div className="mt-5 ml-5 flex flex-wrap gap-y-5">
      <NumberField label="X" value={0} />
      <NumberField label="Y" value={0} />
      <NumberField label="W" value={320} />
      <NumberField label="H" value={1080} />
    </div>
    <div className="mt-[19px]">
      <Section title="Border" />
    </div>
    <div className="mt-[19px] ml-5 h-0.5 w-[286px] bg-[#5a5a5a]" />
    <button className="mt-[19px] ml-5 h-[37px] w-[286px] rounded-sm border border-[#7e7e7e] bg-[#606060] text-[15px]">Add Audio Widget</button>
    <div className="mt-5 flex h-[38px] items-center justify-between rounded-t-md border border-[#7a7a7a] bg-[#454545] pr-[35px] pl-[13px]">
      <h2>Add Image</h2>
      <span>Total Duration: 0s</span>
    </div>
    <div className="mt-3 mr-3 ml-3 flex h-[38px] items-stretch overflow-hidden rounded-sm border border-[#707070]">
      <button aria-label="Open folder" className="flex w-[38px] items-center justify-center bg-[#5c5c5c]">
        <svg width="18" height="16" viewBox="0 0 18 16" fill="none" stroke="#c4c4c4" strokeWidth="1.400" strokeLinejoin="round">
          <path d="M1 15V1h5l2 2h7v3M1 15l3.500-9H17l-2.500 9z" />
        </svg>
      </button>
      <input aria-label="Folder path" defaultValue="C:\Users\markeys\Desktop" className="min-w-0 flex-1 bg-transparent pl-[17px] outline-none" />
      <button aria-label="Up one level" className="flex w-10 items-center justify-center border-r border-[#4a4a4a]">
        <svg width="25" height="21" viewBox="0 0 25 21" fill="none" stroke="#c0c0c0" strokeWidth="1.800">
          <path d="M15 19.500H3.500A1.500 1.500 0 0 1 2 18V2.500h7l2.500 3h11A1.500 1.500 0 0 1 24 7v4" />
          <path d="M20.500 21v-8M17 16l3.500-3.500L24 16" />
        </svg>
      </button>
      <button aria-label="Refresh" className="flex w-10 items-center justify-center">
        <svg width="22" height="22" viewBox="0 0 22 22" fill="none" stroke="#c0c0c0" strokeWidth="1.900">
          <path d="M20 9a9 9 0 0 0-17-2M2 2v6h6M2 13a9 9 0 0 0 17 2M20 20v-6h-6" />
        </svg>
      </button>
    </div>
    <div className="mt-[22px] flex">
      <figure className="flex w-[152px] flex-col items-center">
        <div className="h-[50px] w-[15px] bg-[#ff7f27]" />
        <figcaption className="mt-[9px]">320by1080.png</figcaption>
      </figure>
      <figure className="flex w-[153px] flex-col items-center">
        <svg width="44" height="50" viewBox="0 0 44 50">
          <path d="M0 9a2 2 0 0 1 2-2h13l4 4h23a2 2 0 0 1 2 2v25H0z" fill="#f7b71c" />
          <rect x="1" y="13" width="42" height="18" fill="#f3d27c" />
          <path d="M10 14h24v14H10z" fill="#f6dc98" stroke="#efc968" />
          <path d="M18 20h7l2 2v4h-9z" fill="#fff" />
          <path d="M19 23.500h6V25.500h-6z" fill="#3a8fc9" />
          <path d="M0 28h17l3-2h24v13a2 2 0 0 1-2 2H2a2 2 0 0 1-2-2z" fill="url(#gFolder)" />
        </svg>
        <figcaption className="mt-[9px]">Desktop Clutter</figcaption>
      </figure>
    </div>
  </aside>
);

/* ---------- folder dialog ---------- */

const FolderDialog: React.FC = () => (
  <div
    role="dialog"
    aria-labelledby="browse-title"
    className="absolute top-[310px] left-[774px] z-10 w-[612px] overflow-hidden rounded-lg bg-[#f0f0f0] text-sm text-black shadow-2xl ring-1 ring-[#4a4a4a]"
  >
    <div className="flex h-[37px] items-center justify-between bg-[#f3f1f3] pr-3.5 pl-[9px]">
      <h2 id="browse-title">Browse For Folder</h2>
      <button aria-label="Close dialog">
        <svg width="14" height="14" viewBox="0 0 14 14" stroke="#1a1a1a" strokeWidth="1.300">
          <path d="M1 1l12 12M13 1L1 13" />
        </svg>
      </button>
    </div>
    <div className="pt-[70px] pr-[17px] pl-[18px]">
      <ul className="h-[568px] border border-[#646464] bg-white">
        <li className="flex">
          <button className="flex h-[26px] items-center border border-l-0 border-[#0078d7] bg-[#cce8ff] pr-1">
            <DesktopIcon />
            <span className="ml-[5px] pt-0.5">Desktop</span>
          </button>
        </li>
        {folders.map((f, i) => (
          <li key={i} className="flex h-[26px] items-center pl-1.5">
            <button aria-label={`Expand ${f.name}`} className={f.leaf ? 'invisible w-[17px]' : 'w-[17px]'}>
              <svg width="7" height="12" viewBox="0 0 7 12" fill="none" stroke="#8a8a8a" strokeWidth="1.700">
                <path d="M1 1l5 5-5 5" />
              </svg>
            </button>
            {f.icon}
            <span className="ml-[5px] pt-0.5">{f.name}</span>
          </li>
        ))}
      </ul>
    </div>
    <div className="flex px-[18px] pt-[17px] pb-[15px] text-xs">
      <button className="ml-px h-[26px] w-[121px] rounded border border-[#cfcfcf] bg-[#fdfdfd]">Make New Folder</button>
      <button className="ml-auto h-[26px] w-[86px] rounded border border-[#0078d4] bg-[#fdfdfd]">OK</button>
      <button className="ml-2 h-[26px] w-[86px] rounded border border-[#cfcfcf] bg-[#fdfdfd]">Cancel</button>
    </div>
    <svg className="absolute right-[3px] bottom-0.5" width="12" height="12" viewBox="0 0 12 12" fill="#bcbcbc">
      <path d="M9 1h3v3H9zM9 5h3v3H9zM5 5h3v3H5zM9 9h3v3H9zM5 9h3v3H5zM1 9h3v3H1z" />
    </svg>
  </div>
);

/* ---------- taskbar ---------- */

const TaskIcon: React.FC<{ children: React.ReactNode }> = ({ children }) => (
  <svg width="30" height="30" viewBox="0 0 30 30" fill="none" aria-hidden="true">
    {children}
  </svg>
);

const taskApps: { name: string; running?: boolean; active?: boolean; icon: React.ReactNode }[] = [
  {
    name: 'Start',
    icon: <path d="M0 1h14v13.500H0zM15 1h14v13.500H15zM0 15.500h14V29H0zM15 15.500h14V29H15z" fill="url(#gWin)" />,
  },
  {
    name: 'Search',
    icon: (
      <>
        <path d="M21 21l7 7" stroke="#cfcfcf" strokeWidth="4" strokeLinecap="round" />
        <circle cx="13.500" cy="13" r="10.500" fill="#4c4c4c" stroke="#e4e4e4" strokeWidth="2.500" />
      </>
    ),
  },
  {
    name: 'File Explorer',
    icon: (
      <>
        <path d="M0 4a2 2 0 0 1 2-2h8l3 3.500h15a2 2 0 0 1 2 2V12H0z" fill="#d99a09" />
        <path d="M0 9l11-.5L14 6h16v22H0z" fill="url(#gFolder)" />
        <path d="M5 28v-5a2 2 0 0 1 2-2h16a2 2 0 0 1 2 2v5z" fill="#0f78d0" />
        <path d="M8 24.500h14" stroke="#0a4f94" strokeWidth="1.500" />
      </>
    ),
  },
  {
    name: 'Chrome',
    icon: (
      <>
        <path d="M15 15L2 7.500A15 15 0 0 1 28 7.500H15z" fill="#e33b2e" />
        <path d="M15 7.500H28A15 15 0 0 1 15 30l6.500-11z" fill="#fbbc05" />
        <path d="M15 15l6.500 3.800L15 30A15 15 0 0 1 2 7.500z" fill="#2f9e4f" />
        <circle cx="15" cy="15" r="7.500" fill="#fff" />
        <circle cx="15" cy="15" r="5.800" fill="#3b80f0" />
      </>
    ),
  },
  {
    name: 'Media Player',
    icon: (
      <>
        <circle cx="15" cy="15" r="14" fill="#3a3a3c" stroke="url(#gRing)" strokeWidth="2" />
        <path d="M11 7.500l11 7.500-11 7.500z" fill="#fff" />
      </>
    ),
  },
  {
    name: 'Settings',
    icon: (
      <>
        <path
          d="M11.500 1l1.500 2h4l1.500-2 4.500 1.500.5 4.500 2 2.500 4.500 2v7l-4.500 2-2 2.500-.5 4.500-4.500 2-1.500-3h-4l-1.500 3L7 27.500 6.500 23l-2-2.500-4.500-2v-7l4.500-2 2-2.500L7 2.500z"
          fill="#7d8791"
        />
        <circle cx="15" cy="15" r="6.500" fill="#0f62ad" stroke="#e8eef3" strokeWidth="1.600" />
      </>
    ),
  },
  {
    name: 'Paint',
    running: true,
    icon: (
      <>
        <path d="M13 4.500c8-1.500 14 3 14 9.500 0 5-4 5-6 7s1 5-6 5.500C8 27 3 24 4 21c.5-1.500-3.500-1.500-3.500-6C.5 10 5.500 6 13 4.500z" fill="url(#gPalette)" />
        <circle cx="5" cy="16" r="2.200" fill="#e8584e" />
        <circle cx="9.500" cy="11" r="2.400" fill="#55b35a" />
        <circle cx="15.500" cy="8.500" r="2.400" fill="#f5b52e" />
        <circle cx="12" cy="17.500" r="2" fill="#2a4a60" />
        <path d="M24 7l-9 21" stroke="#e08a2e" strokeWidth="2.500" strokeLinecap="round" />
        <path d="M23 7l1-5 6 1-4 6z" fill="#b08a5c" />
      </>
    ),
  },
  {
    name: 'Designer',
    running: true,
    active: true,
    icon: (
      <>
        <rect width="30" height="30" rx="5" fill="url(#gBird)" />
        <path d="M16 5c1.500 4 1.500 8-.5 12 2.500-2.500 3.500-5 4-8.500 3.500 2 6 4.500 4.500 9-2 5.500-9 8-17.500 6.500C13 21 17.500 15 16 5z" fill="#fff" />
        <path d="M6 11.500c4 2 6.500 4 6 7-.3 1.500-2.500 3.500-4.500 5C8.500 19 8 15.500 6 11.500z" fill="#fff" />
      </>
    ),
  },
];

const Taskbar: React.FC = () => (
  <footer className="flex h-[60px] shrink-0 items-center border-t border-[#474747] bg-[#202020] pr-[26px] pb-0.5 pl-3.5">
    {taskApps.map((app) => (
      <button
        key={app.name}
        aria-label={app.name}
        className="flex w-[55px] items-center justify-center"
      >
        <span
          className={
            app.active
              ? 'relative flex h-[50px] w-[50px] items-center justify-center rounded-md border border-[#383838] bg-[#2e2e2e]'
              : 'relative flex h-[50px] w-[50px] items-center justify-center'
          }
        >
          <TaskIcon>{app.icon}</TaskIcon>
          {app.running && (
            <span
              className={
                app.active
                  ? 'absolute bottom-0 h-1 w-5 rounded-full bg-[#a5a29f]'
                  : 'absolute bottom-0 h-1 w-2 rounded-full bg-[#8f8f8f]'
              }
            />
          )}
        </span>
      </button>
    ))}
    <div className="ml-auto flex items-center">
      <button aria-label="Hidden icons" className="mr-[23px]">
        <svg width="14" height="9" viewBox="0 0 14 9" fill="none" stroke="#f0f0f0" strokeWidth="2">
          <path d="M1 8l6-6 6 6" />
        </svg>
      </button>
      <svg width="20" height="20" viewBox="0 0 20 20" fill="none" stroke="#f0f0f0" strokeWidth="1.300">
        <path d="M12.500 1H2a1 1 0 0 0-1 1v13a1 1 0 0 0 1 1h13M5 19.300h9M7 16v3M12 16v3" />
        <path d="M14.500 1h4.500v6h-4.500zM17 7v12" />
      </svg>
      <svg className="ml-2.5" width="20" height="18" viewBox="0 0 20 18" fill="none" stroke="#f0f0f0" strokeWidth="1.300">
        <path d="M1 6h3l5-4.500v15L4 12H1zM11.500 6.500a4 4 0 0 1 0 5M14 4a7.500 7.500 0 0 1 0 10M16.500 1.500a11 11 0 0 1 0 15" />
      </svg>
      <svg className="ml-2.5" width="20" height="18" viewBox="0 0 20 18" fill="none">
        <rect x="1" y="4.500" width="16" height="12" rx="2.500" stroke="#f0f0f0" strokeWidth="1.300" />
        <path d="M8 6.500h7.500v8h-12V11zM18 8.500h2v4h-2z" fill="#f0f0f0" />
        <path d="M4 0L0 7h3l-1.500 5L8 4.500H4.500L6 0z" fill="#f0f0f0" stroke="#202020" strokeWidth="0.600" />
      </svg>
      <time className="ml-[21px] text-right text-sm leading-5 text-white">
        12:27:50 PM
        <br />
        7/2/2026
      </time>
    </div>
  </footer>
);

const App: React.FC = () => (
  <div className="relative flex h-screen flex-col overflow-hidden bg-[#383838] font-['Open_Sans',sans-serif] text-white">
    <Gradients />
    <TitleBar />
    <Toolbar />
    <div className="flex min-h-0 flex-1">
      <LeftPanel />
      <Canvas />
      <RightPanel />
    </div>
    <Taskbar />
    <FolderDialog />
  </div>
);

export default App;
